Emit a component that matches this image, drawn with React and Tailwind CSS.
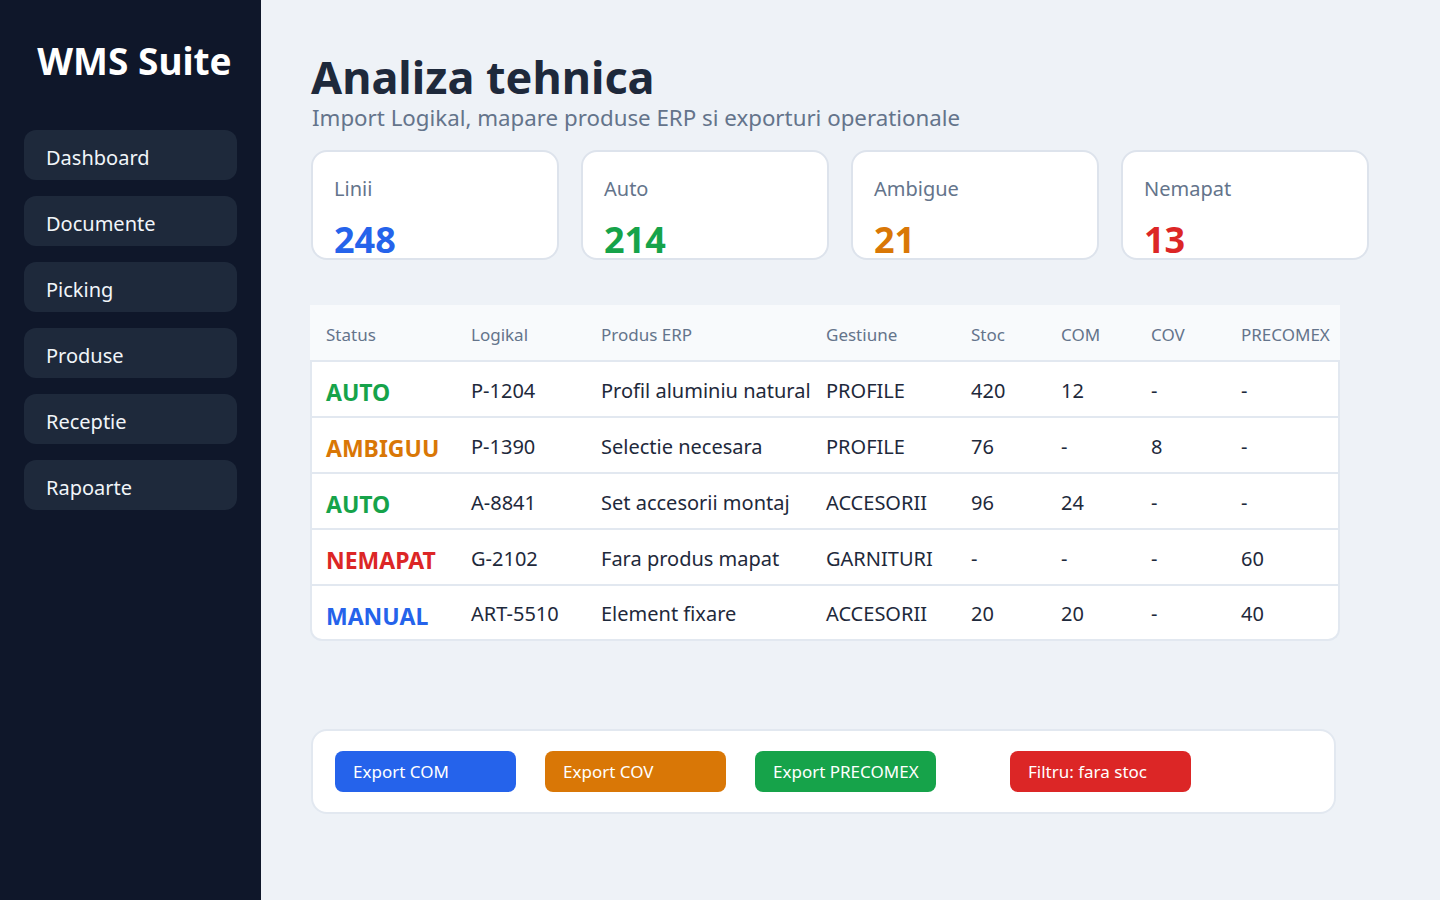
import React from 'react';

const nav = ['Dashboard', 'Documente', 'Picking', 'Produse', 'Receptie', 'Rapoarte'];

const stats = [
  { label: 'Linii', value: '248', color: 'text-[#2563eb]' },
  { label: 'Auto', value: '214', color: 'text-[#16a34a]' },
  { label: 'Ambigue', value: '21', color: 'text-[#d97706]' },
  { label: 'Nemapat', value: '13', color: 'text-[#dc2626]' },
];

const statusColor = {
  AUTO: 'text-[#16a34a]',
  AMBIGUU: 'text-[#d97706]',
  NEMAPAT: 'text-[#dc2626]',
  MANUAL: 'text-[#2563eb]',
};

const rows = [
  ['AUTO', 'P-1204', 'Profil aluminiu natural', 'PROFILE', '420', '12', '-', '-'],
  ['AMBIGUU', 'P-1390', 'Selectie necesara', 'PROFILE', '76', '-', '8', '-'],
  ['AUTO', 'A-8841', 'Set accesorii montaj', 'ACCESORII', '96', '24', '-', '-'],
  ['NEMAPAT', 'G-2102', 'Fara produs mapat', 'GARNITURI', '-', '-', '-', '60'],
  ['MANUAL', 'ART-5510', 'Element fixare', 'ACCESORII', '20', '20', '-', '40'],
];

const headers = ['Status', 'Logikal', 'Produs ERP', 'Gestiune', 'Stoc', 'COM', 'COV', 'PRECOMEX'];
const widths = ['w-[145px]', 'w-[130px]', 'w-[225px]', 'w-[145px]', 'w-[90px]', 'w-[90px]', 'w-[90px]', 'flex-1'];

const App = () => {
  return (
    <div className="flex h-[900px] w-[1440px] bg-[#eef2f7] font-['Noto_Sans',sans-serif]">
      {/* Sidebar */}
      <aside className="w-[261px] shrink-0 bg-[#0f172a] px-6">
        <h1 className="ml-2 mt-[37px] text-center text-[37px] font-bold leading-[48px] text-white">WMS Suite</h1>
        <nav className="mt-[45px] flex flex-col gap-4">
          {nav.map((item) => (
            <div key={item} className="flex h-[50px] items-center rounded-xl bg-[#1e293b] px-[22px] pt-[5px] text-[20px] text-[#f1f5f9]">
              {item}
            </div>
          ))}
        </nav>
      </aside>

      {/* Main */}
      <main className="flex-1 pl-[50px] pr-[70px]">
        <h2 className="mt-[51px] text-[45px] font-bold leading-[52px] text-[#1e293b]">Analiza tehnica</h2>
        <p className="ml-px text-[22.3px] leading-[30px] text-[#64748b]">
          Import Logikal, mapare produse ERP si exporturi operationale
        </p>

        {/* Stat cards */}
        <div className="mt-[17px] flex gap-[22px]">
          {stats.map((s) => (
            <div key={s.label} className="h-[110px] w-[248px] shrink-0 rounded-2xl border-2 border-[#dde3ec] bg-white px-[21px] pt-[23px]">
              <div className="text-[20px] leading-[28px] text-[#64748b]">{s.label}</div>
              <div className={`mt-[15px] text-[36px] font-bold leading-[44px] ${s.color}`}>{s.value}</div>
            </div>
          ))}
        </div>

        {/* Table */}
        <div className="mt-[45px] w-[1030px] -ml-px">
          <div className="flex h-[57px] items-center bg-[#f8fafc] border-b-2 border-[#e2e8f0] pt-[4px] text-[17px] text-[#64748b]">
            {headers.map((h, i) => (
              <div key={h} className={`${widths[i]} shrink-0 pl-4`}>{h}</div>
            ))}
          </div>
          <div className="rounded-b-xl border-x-2 border-b-2 border-[#e2e8f0] bg-white">
            {rows.map((r, ri) => (
              <div key={ri} className={`flex items-center pt-[3px] text-[20px] text-[#1e293b] ${ri < rows.length - 1 ? 'h-[56px] border-b-2 border-[#e2e8f0]' : 'h-[53px]'}`}>
                {r.map((c, ci) => (
                  <div
                    key={ci}
                    className={`${ci === 0 ? 'w-[143px]' : widths[ci]} shrink-0 whitespace-nowrap ${ci === 0 ? `pl-[14px] pt-1 text-[23px] font-bold ${statusColor[c]}` : 'pl-4'}`}
                  >
                    {c}
                  </div>
                ))}
              </div>
            ))}
          </div>
        </div>

        {/* Actions */}
        <div className="mt-[88px] flex h-[85px] w-[1025px] items-center rounded-2xl border-2 border-[#e2e8f0] bg-white pl-[22px]">
          <button className="h-[41px] w-[181px] rounded-lg bg-[#2563eb] pl-[18px] text-left text-[17px] text-white">Export COM</button>
          <button className="ml-[29px] h-[41px] w-[181px] rounded-lg bg-[#d97706] pl-[18px] text-left text-[17px] text-white">Export COV</button>
          <button className="ml-[29px] h-[41px] w-[181px] rounded-lg bg-[#16a34a] pl-[18px] text-left text-[17px] text-white">Export PRECOMEX</button>
          <button className="ml-[74px] h-[41px] w-[181px] rounded-lg bg-[#dc2626] pl-[18px] text-left text-[17px] text-white">Filtru: fara stoc</button>
        </div>
      </main>
    </div>
  );
};

export default App;
